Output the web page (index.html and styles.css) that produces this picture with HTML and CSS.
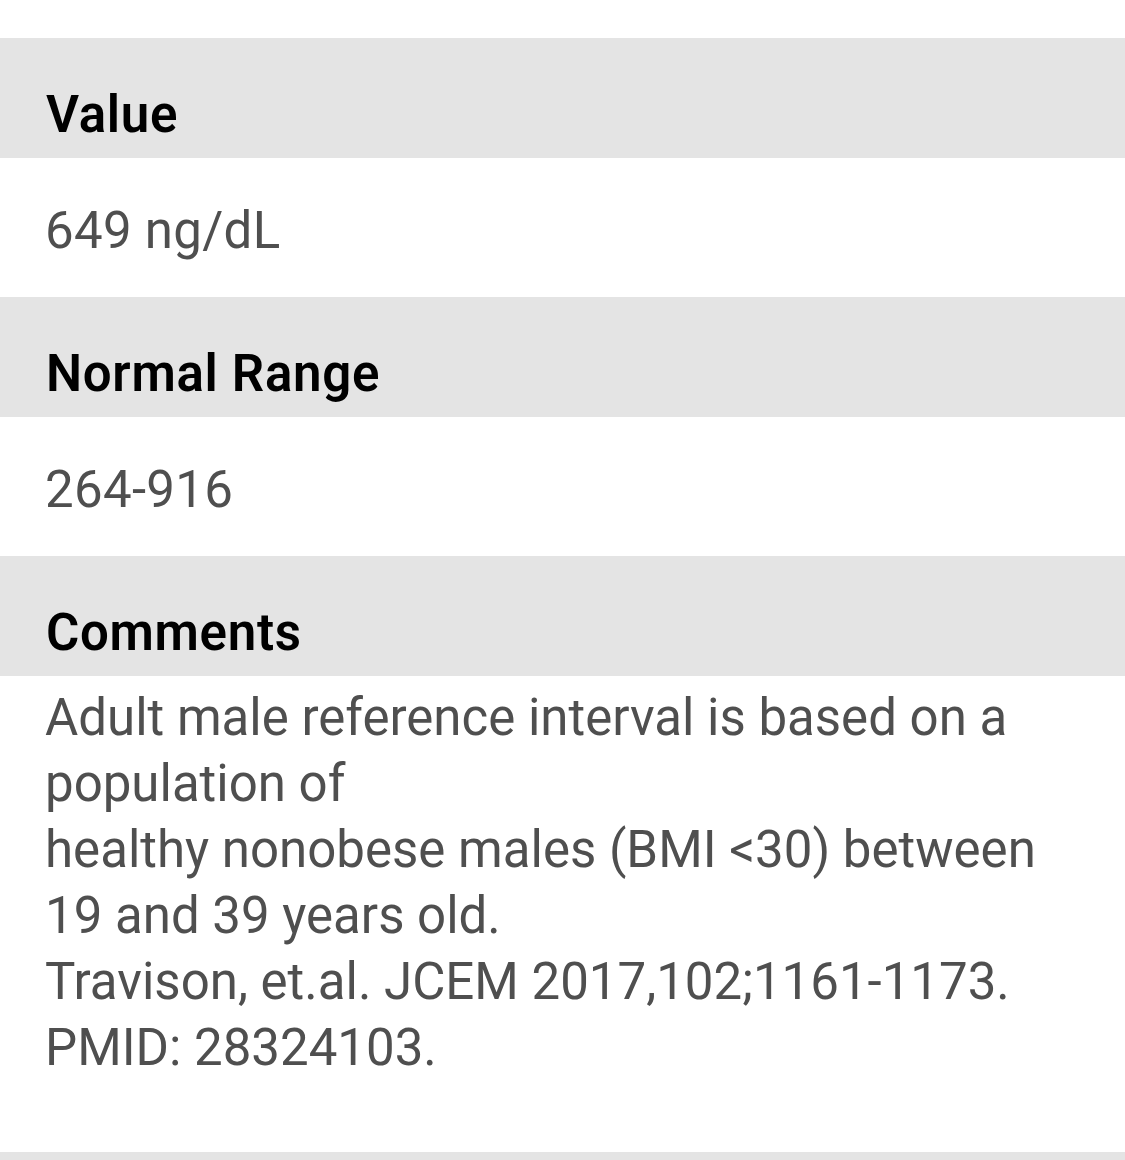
FILE: index.html
```html
<!DOCTYPE html>
<html lang="en">
<head>
<meta charset="utf-8">
<title>Result Detail</title>
<link rel="stylesheet" href="styles.css">
</head>
<body>
<main class="detail">
  <section class="field">
    <h2 class="field-label">Value</h2>
    <p class="field-value">649 ng/dL</p>
  </section>
  <section class="field">
    <h2 class="field-label">Normal Range</h2>
    <p class="field-value">264-916</p>
  </section>
  <section class="field">
    <h2 class="field-label">Comments</h2>
    <p class="field-comment">Adult male reference interval is based on a<br>population of<br>healthy nonobese males (BMI &lt;30) between<br>19 and 39 years old.<br>Travison, et.al. JCEM 2017,102;1161-1173.<br>PMID: 28324103.</p>
  </section>
  <div class="field-label field-label--empty"></div>
</main>
</body>
</html>
```
FILE: styles.css
```css
html, body {
  margin: 0;
  padding: 0;
  background: #ffffff;
}

body {
  font-family: Roboto, "Liberation Sans", sans-serif;
  font-size: 51px;
  line-height: 66px;
  -webkit-font-smoothing: antialiased;
}

.detail {
  display: flex;
  flex-direction: column;
  padding-top: 38px;
}

.field {
  display: flex;
  flex-direction: column;
}

.field-label {
  margin: 0;
  height: 120px;
  box-sizing: border-box;
  padding: 44px 45px 10px 46px;
  background: #e4e4e4;
  color: #000000;
  font-size: 51px;
  font-weight: 600;
  line-height: 66px;
  letter-spacing: 0.7px;
}

.field-label--empty {
  height: 40px;
  padding: 0;
}

.field-value {
  margin: 0;
  height: 139px;
  box-sizing: border-box;
  padding: 40px 45px 33px;
  color: #4f4f4f;
  font-weight: 400;
  letter-spacing: 0.3px;
}

.field-comment {
  margin: 0;
  box-sizing: border-box;
  height: 476px;
  padding: 9px 45px 71px;
  color: #4f4f4f;
  font-weight: 400;
}
```
